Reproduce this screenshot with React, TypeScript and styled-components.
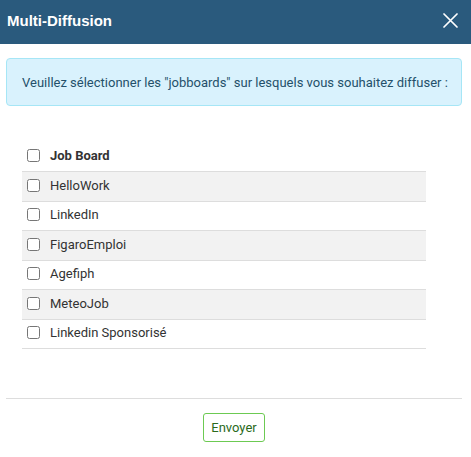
import React from 'react';
import styled, { createGlobalStyle } from 'styled-components';

const GlobalStyle = createGlobalStyle`
  html, body {
    margin: 0;
    padding: 0;
    background: #ffffff;
    font-family: Roboto, 'Liberation Sans', Arial, sans-serif;
  }
`;

const boards = ['HelloWork', 'LinkedIn', 'FigaroEmploi', 'Agefiph', 'MeteoJob', 'Linkedin Sponsorisé'];

const Modal = styled.div`
  width: 471px;
  height: 457px;
  display: flex;
  flex-direction: column;
  background: #fff;
`;

const Header = styled.div`
  height: 44px;
  background: #2a5a7d;
  display: flex;
  align-items: center;
  justify-content: space-between;
  padding: 0 13px 0 7px;
  box-sizing: border-box;
`;

const Title = styled.h4`
  margin: 0;
  color: #fff;
  font-family: 'Liberation Sans', Arial, sans-serif;
  font-size: 15px;
  font-weight: bold;
  margin-top: -4px;
`;

const CloseButton = styled.button`
  border: 0;
  background: none;
  padding: 0;
  width: 16px;
  height: 16px;
  display: flex;
  align-items: center;
  justify-content: center;
  margin-top: -4px;
  cursor: pointer;
`;

const Body = styled.div`
  padding: 14px 9px 0 6px;
  flex: 1;
`;

const InfoBox = styled.div`
  height: 48px;
  box-sizing: border-box;
  display: flex;
  align-items: center;
  padding: 0 15px;
  background: #d9f2fd;
  border: 1px solid #a6e6f6;
  border-radius: 4px;
  color: #24506a;
  font-size: 13px;
  white-space: nowrap;
`;

const Table = styled.div`
  width: 404px;
  margin: 35px 0 0 16px;
  font-size: 13px;
  color: #333;
  border-bottom: 1px solid #ddd;
`;

const Row = styled.label<{ $striped?: boolean; $head?: boolean }>`
  display: flex;
  align-items: center;
  height: ${(p) => (p.$head ? '30px' : '29.5px')};
  box-sizing: border-box;
  border-top: ${(p) => (p.$head ? 'none' : '1px solid #ddd')};
  background: ${(p) => (p.$striped ? '#f2f2f2' : 'transparent')};
  font-weight: ${(p) => (p.$head ? 'bold' : 'normal')};
  padding-left: 1px;
  padding-bottom: 2px;
`;

const Check = styled.input`
  width: 13px;
  height: 13px;
  margin: 0 10px 0 4px;
`;

const Footer = styled.div`
  margin: 0 9px 0 6px;
  border-top: 1px solid #ddd;
  height: 59px;
  display: flex;
  justify-content: center;
  padding-top: 14px;
  box-sizing: border-box;
`;

const SendButton = styled.button`
  height: 29px;
  padding: 0 7px;
  background: #fff;
  border: 1px solid #6cca52;
  border-radius: 3px;
  color: #2b6a1c;
  font-family: Roboto, 'Liberation Sans', Arial, sans-serif;
  font-size: 13px;
  cursor: pointer;
`;

export default function App() {
  return (
    <Modal>
      <GlobalStyle />
      <Header>
        <Title>Multi-Diffusion</Title>
        <CloseButton aria-label="Fermer">
          <svg width="15" height="15" viewBox="0 0 15 15">
            <path d="M1 1 L14 14 M14 1 L1 14" stroke="#fff" strokeWidth="1.7" strokeLinecap="round" />
          </svg>
        </CloseButton>
      </Header>
      <Body>
        <InfoBox>Veuillez sélectionner les "jobboards" sur lesquels vous souhaitez diffuser :</InfoBox>
        <Table>
          <Row $head>
            <Check type="checkbox" />
            Job Board
          </Row>
          {boards.map((b, i) => (
            <Row key={b} $striped={i % 2 === 0}>
              <Check type="checkbox" />
              {b}
            </Row>
          ))}
        </Table>
      </Body>
      <Footer>
        <SendButton>Envoyer</SendButton>
      </Footer>
    </Modal>
  );
}
